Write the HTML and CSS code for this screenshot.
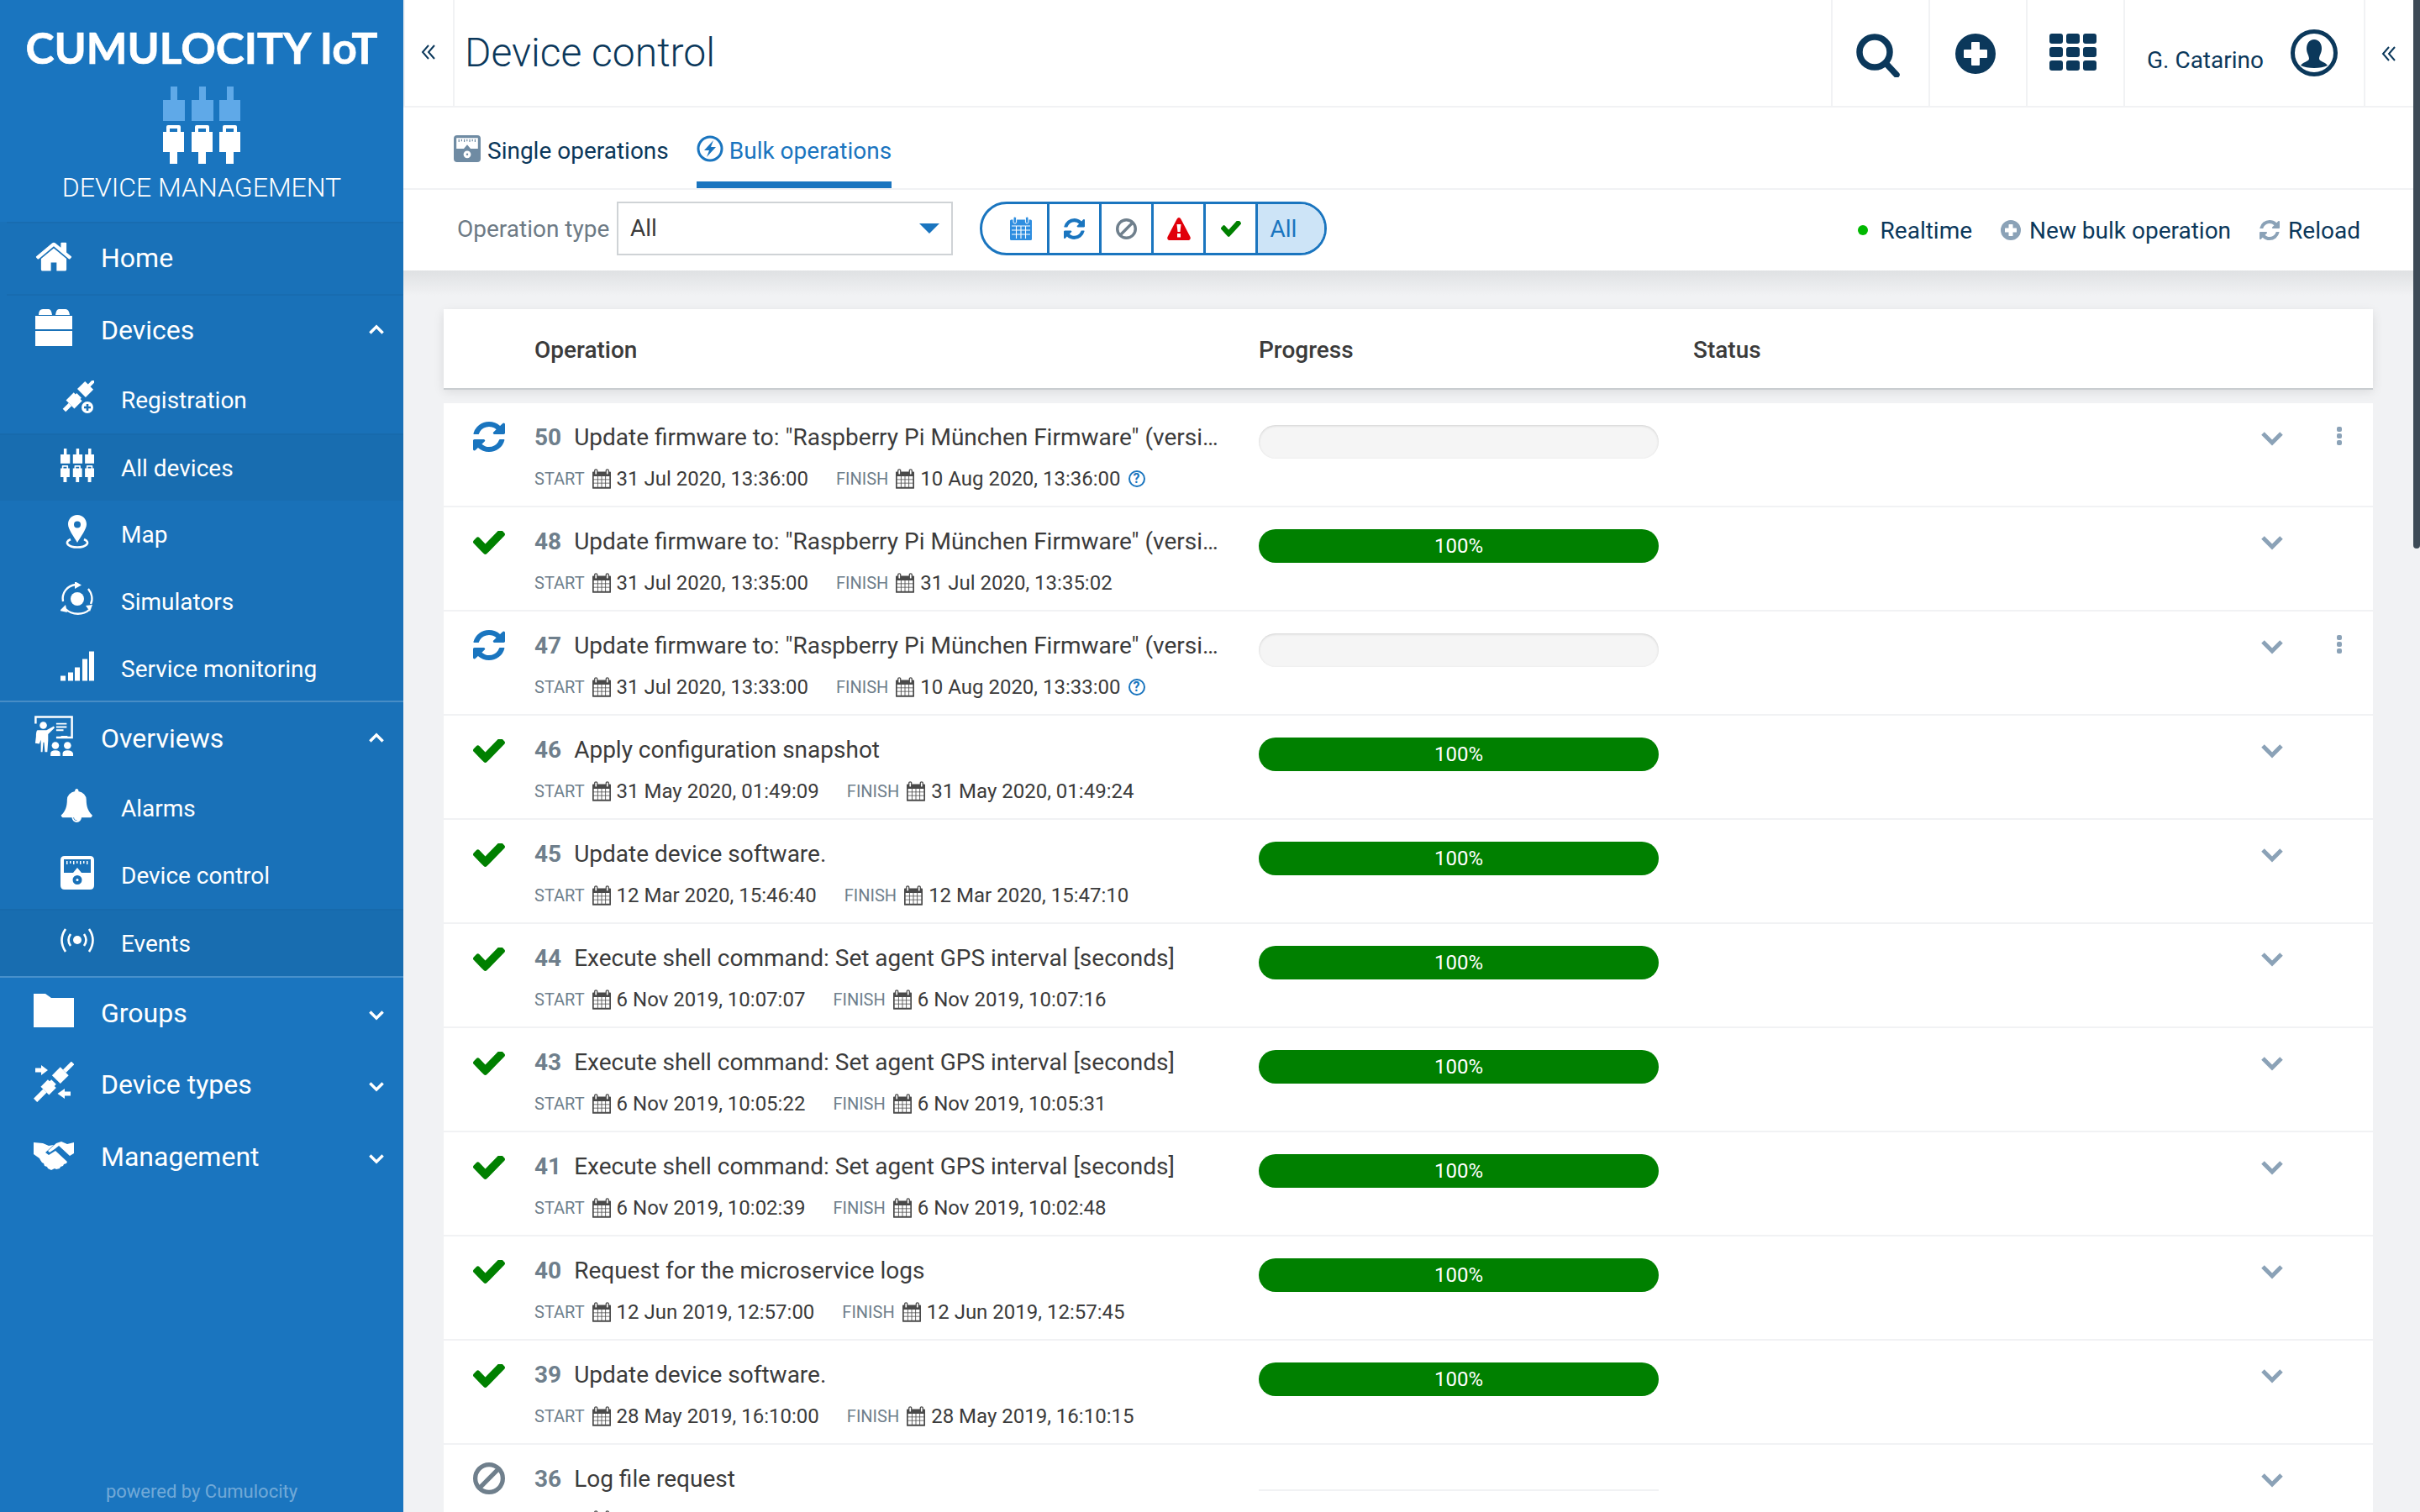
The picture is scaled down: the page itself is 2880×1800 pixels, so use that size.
FILE: index.html
```html
<!DOCTYPE html>
<html lang="en">
<head>
  <meta charset="UTF-8" />
  <title>Device control</title>
  <link rel="stylesheet" href="styles.css">
</head>
<body>
  <svg class="defs" width="0" height="0">
    <symbol id="i-plugs" viewBox="0 0 92 92">
      <g class="plug-top">
        <path d="M8 16h9V0h8v16h9v25H8z" transform="translate(-8 0)"/>
        <path d="M8 16h9V0h8v16h9v25H8z" transform="translate(26 0)"/>
        <path d="M8 16h9V0h8v16h9v25H8z" transform="translate(59 0)"/>
      </g>
      <g id="plug-low" fill="currentColor">
        <path fill-rule="evenodd" d="M0 54h4v-6q0-2 2-2h13q2 0 2 2v6h4v24h-8v14h-9V78H0zM8 50v4h9v-4z"/>
        <path fill-rule="evenodd" d="M34 54h4v-6q0-2 2-2h13q2 0 2 2v6h4v24h-8v14h-9V78H34zM42 50v4h9v-4z"/>
        <path fill-rule="evenodd" d="M67 54h4v-6q0-2 2-2h13q2 0 2 2v6h4v24h-8v14h-9V78H67zM75 50v4h9v-4z"/>
      </g>
    </symbol>
    <symbol id="i-home" viewBox="-18 -82 1829 1829"><path fill="currentColor" d="M1472 992v480q0 26-19 45t-45 19h-384v-384h-256v384h-384q-26 0-45-19t-19-45v-480q0-1 .5-3t.5-3l575-474 575 474q1 2 1 6zm223-69l-62 74q-8 9-21 11h-3q-13 0-21-7l-692-577-692 577q-12 8-24 7-13-2-21-11l-62-74q-8-10-7-23.5t11-21.5l719-599q32-26 76-26t76 26l244 204v-195q0-14 9-23t23-9h192q14 0 23 9t9 23v408l219 182q10 8 11 21.5t-7 23.5z"/></symbol>
    <symbol id="i-devices" viewBox="-2 -2 48 48"><path fill="currentColor" d="M4 7q0-7 5-7h7q3 0 4 7zM24 7q1-7 4-7h8q4 0 5 7zM0 8h44v16H0zM0 26h44v18H0z"/></symbol>
    <symbol id="i-reg" viewBox="0 0 40 40">
      <g fill="currentColor" transform="rotate(45 20 20)">
        <rect x="18" y="-9" width="4" height="10"/><rect x="13" y="0" width="14" height="13"/>
        <path d="M13 19h3v-2h8v2h3v13H13z"/><rect x="17.500" y="32" width="5" height="10"/>
      </g>
      <circle cx="32" cy="32" r="8" fill="currentColor" stroke="var(--nav-bg, #1971b8)" stroke-width="2"/>
      <path d="M28 32h8M32 28v8" stroke="var(--nav-bg, #1971b8)" stroke-width="2.600"/>
    </symbol>
    <symbol id="i-pin" viewBox="0 0 40 40">
      <path fill="currentColor" fill-rule="evenodd" d="M20 0c6.500 0 11 5 11 11 0 6-7 15-11 22C16 26 9 17 9 11 9 5 13.500 0 20 0zm0 7.500a4 4 0 100 8 4 4 0 000-8z"/>
      <path fill="none" stroke="currentColor" stroke-width="2.600" d="M12 29c-9 4-2 9.500 8 9.500s17-5.500 8-9.500"/>
    </symbol>
    <symbol id="i-sim" viewBox="0 0 40 40">
      <circle cx="20" cy="20" r="8" fill="currentColor"/>
      <g fill="none" stroke="currentColor" stroke-width="2.400">
        <path d="M3 23C1 13 8 4 18 3"/><path d="M34 33c-6 6-20 7-28-1"/><path d="M33 8c4 5 6 12 3 18"/>
      </g>
      <g fill="currentColor"><path d="M17 -1l8 4.500-8 4.500zM6 27l2 9-9-2zM30 28l8-1-3 8z"/></g>
    </symbol>
    <symbol id="i-signal" viewBox="0 0 40 35"><path fill="currentColor" d="M0 29h6v6H0zM9 25h6v10H9zM17 19h6v16h-6zM26 9h6v26h-6zM34 0h6v35h-6z"/></symbol>
    <symbol id="i-board" viewBox="0 0 48 50">
      <path fill="none" stroke="currentColor" stroke-width="2.600" d="M1.500 10V1.500h45V27H27"/>
      <path fill="currentColor" d="M27 9h13v2H27zM27 13h13v2H27zM27 17h9v2h-9zM33 25h8v3h-8z"/>
      <circle cx="11" cy="12" r="4.500" fill="currentColor"/>
      <path fill="currentColor" d="M4 18h11l9-5 1 2-8 8v8l-1 14h-3l-1-12h-1l-1 12H8V30l-2 5-5-1 1-8q0-8 2-8z"/>
      <circle cx="26" cy="37" r="4.500" fill="currentColor"/><circle cx="41" cy="37" r="4.500" fill="currentColor"/>
      <path fill="currentColor" d="M20 50v-3q0-4 6-4t6 4v3zM35 50v-3q0-4 6-4t7 4v3z"/>
    </symbol>
    <symbol id="i-bell" viewBox="128 0 1600 1792"><path fill="currentColor" d="M912 1696q0-16-16-16-59 0-101.500-42.500t-42.500-101.500q0-16-16-16t-16 16q0 73 51.500 124.500t124.500 51.500q16 0 16-16zm816-288q0 52-38 90t-90 38h-448q0 106-75 181t-181 75-181-75-75-181h-448q-52 0-90-38t-38-90q50-42 91-88t85-119.500 74.500-158.500 50-206 19.500-260q0-152 117-282.500t307-158.500q-8-19-8-39 0-40 28-68t68-28 68 28 28 68q0 20-8 39 190 28 307 158.500t117 282.500q0 139 19.500 260t50 206 74.500 158.500 85 119.500 91 88z"/></symbol>
    <symbol id="i-dial" viewBox="0 0 40 40">
      <path fill="currentColor" fill-rule="evenodd" d="M5 0h30q5 0 5 5v30q0 5-5 5H5q-5 0-5-5V5q0-5 5-5zM4 4v16h11l5-6 5 6h11V4zM20 23a5.500 5.500 0 100 11 5.500 5.500 0 000-11z"/>
      <path fill="currentColor" d="M7 6h1.500v4H7zM11 6h1.500v3H11zM15 6h1.500v4H15zM19 6h1.500v3H19zM23 6h1.500v4H23zM27 6h1.500v3H27zM31 6h1.500v4H31z"/>
      <circle cx="20" cy="28.500" r="1.500" fill="currentColor"/>
    </symbol>
    <symbol id="i-events" viewBox="0 0 40 32">
      <circle cx="20" cy="15" r="5" fill="currentColor"/>
      <g fill="none" stroke="currentColor" stroke-width="2.600">
        <path d="M12 8q-5 7 0 14M28 8q5 7 0 14M6 2q-9 13 0 27M34 2q9 13 0 27"/>
      </g>
    </symbol>
    <symbol id="i-folder" viewBox="0 0 48 40"><path fill="currentColor" d="M0 0h14l7 5h27v35H0z"/></symbol>
    <symbol id="i-types" viewBox="0 0 48 48">
      <g fill="currentColor" transform="rotate(45 24 24)">
        <rect x="21.500" y="-8" width="5" height="14"/><rect x="17" y="6" width="14" height="14"/>
        <path d="M17 27h3v-3h8v3h3v12H17z"/><rect x="21" y="39" width="6" height="16"/>
      </g>
      <path fill="currentColor" d="M2 7.500h7V4l8 6-8 6v-3.500H2zM44 35.500h-7V32l-8.500 6 8.500 6v-3.500h7z"/>
    </symbol>
    <symbol id="i-hands" viewBox="0 0 48 32">
      <path fill="currentColor" d="M0 2l11 1 7 3 6-1-10 9 4 3 8-5 14 13-1 2-3 1-1 2-3 1-1 2-4 1-2-1-4 2-4-2-1-2-3-1-1-3-2-1-2-3-1-2-7-5zM48 2v13l-5 3-13-12-5 4-6 4-2-2 10-9 6-2 7 3z"/>
    </symbol>
    <symbol id="i-sync" viewBox="128 128 1536 1536" preserveAspectRatio="none"><path fill="currentColor" d="M1639 1056q0 5-1 7-64 268-268 434.500t-478 166.500q-146 0-282.500-55t-243.500-157l-129 129q-19 19-45 19t-45-19-19-45v-448q0-26 19-45t45-19h448q26 0 45 19t19 45-19 45l-137 137q71 66 161 102t187 36q134 0 250-65t186-179q11-17 53-117 8-23 30-23h192q13 0 22.500 9.500t9.500 22.500zm25-800v448q0 26-19 45t-45 19h-448q-26 0-45-19t-19-45 19-45l138-138q-148-137-349-137-134 0-250 65t-186 179q-11 17-53 117-8 23-30 23h-199q-13 0-22.500-9.500t-9.500-22.500v-7q65-268 270-434.500t480-166.500q146 0 284 55.500t245 156.500l130-129q19-19 45-19t45 19 19 45z"/></symbol>
    <symbol id="i-check" viewBox="121 402 1550 1120" preserveAspectRatio="none"><path fill="currentColor" d="M1671 566q0 40-28 68l-724 724-136 136q-28 28-68 28t-68-28l-136-136-362-362q-28-28-28-68t28-68l136-136q28-28 68-28t68 28l294 295 656-657q28-28 68-28t68 28l136 136q28 28 28 68z"/></symbol>
    <symbol id="i-ban" viewBox="0 0 36 36"><circle cx="18" cy="18" r="15.500" fill="none" stroke="currentColor" stroke-width="5"/><path d="M8 28L28 8" stroke="currentColor" stroke-width="5"/></symbol>
    <symbol id="i-warn" viewBox="0 0 28 27"><path fill="currentColor" fill-rule="evenodd" d="M14 0q1.500 0 2.500 2l11 21q1 3-1.500 4H2q-2.500-1-1.500-4l11-21Q12.500 0 14 0zM11.500 8l1 9h3l1-9zM12 19v4.500h4V19z"/></symbol>
    <symbol id="i-cal" viewBox="0 0 26 28">
      <path fill="currentColor" fill-rule="evenodd" d="M5 0q2.500 0 2.500 2v2h11V2q0-2 2.500-2t2.500 2v2H25q1 0 1 1v22q0 1-1 1H1q-1 0-1-1V5q0-1 1-1h1.500V2Q2.500 0 5 0zM5 1.500q-1 0-1 1v4q0 1 1 1t1-1v-4q0-1-1-1zM21 1.500q-1 0-1 1v4q0 1 1 1t1-1v-4q0-1-1-1zM2 10.500v4h5v-4zM8 10.500v4h4.500v-4zM13.500 10.500v4H18v-4zM19 10.500v4h5v-4zM2 15.500v4h5v-4zM8 15.500v4h4.500v-4zM13.500 15.500v4H18v-4zM19 15.500v4h5v-4zM2 20.500v5h5v-5zM8 20.500v5h4.500v-5zM13.500 20.500v5H18v-5zM19 20.500v5h5v-5z"/>
    </symbol>
    <symbol id="i-cal-solid" viewBox="0 0 26 28">
      <rect y="3.500" width="26" height="24.500" rx="1.500" fill="currentColor"/>
      <rect x="4" y="0" width="3.600" height="8" rx="1.800" fill="currentColor" stroke="#fff" stroke-width="1"/>
      <rect x="18.400" y="0" width="3.600" height="8" rx="1.800" fill="currentColor" stroke="#fff" stroke-width="1"/>
      <path fill="none" stroke="#fff" stroke-width="1.100" d="M2 11h22M2 16h22M2 21h22M7.500 11v15M13 11v15M18.500 11v15"/>
    </symbol>
    <symbol id="i-chev" viewBox="0 0 26 17"><path fill="none" stroke="currentColor" stroke-width="5" d="M2 2l11 11L24 2"/></symbol>
    <symbol id="i-dbl" viewBox="0 0 18 18"><path fill="none" stroke="currentColor" stroke-width="2" d="M9 1L2 9l7 8M16 1L9 9l7 8"/></symbol>
  </svg>

  <aside class="sidebar">
    <div class="brand">
      <div class="brand-name">CUMULOCITY IoT</div>
      <svg class="brand-plugs"><use href="#i-plugs"/></svg>
      <div class="brand-app">DEVICE MANAGEMENT</div>
    </div>
    <nav class="nav">
      <div class="nav-group">
        <a class="nav-item nav-line"><svg class="nav-icon"><use href="#i-home"/></svg>Home</a>
        <a class="nav-item nav-line"><svg class="nav-icon"><use href="#i-devices"/></svg>Devices<svg class="nav-chev up"><use href="#i-chev"/></svg></a>
        <a class="sub-item"><svg class="sub-icon"><use href="#i-reg"/></svg>Registration</a>
        <a class="sub-item active"><svg class="sub-icon"><use href="#i-plugs"/></svg>All devices</a>
        <a class="sub-item"><svg class="sub-icon"><use href="#i-pin"/></svg>Map</a>
        <a class="sub-item"><svg class="sub-icon"><use href="#i-sim"/></svg>Simulators</a>
        <a class="sub-item"><svg class="sub-icon"><use href="#i-signal"/></svg>Service monitoring</a>
      </div>
      <div class="nav-group">
        <a class="nav-item"><svg class="nav-icon"><use href="#i-board"/></svg>Overviews<svg class="nav-chev up"><use href="#i-chev"/></svg></a>
        <a class="sub-item"><svg class="sub-icon"><use href="#i-bell"/></svg>Alarms</a>
        <a class="sub-item"><svg class="sub-icon"><use href="#i-dial"/></svg>Device control</a>
        <a class="sub-item active"><svg class="sub-icon"><use href="#i-events"/></svg>Events</a>
      </div>
      <a class="nav-item"><svg class="nav-icon"><use href="#i-folder"/></svg>Groups<svg class="nav-chev"><use href="#i-chev"/></svg></a>
      <a class="nav-item"><svg class="nav-icon"><use href="#i-types"/></svg>Device types<svg class="nav-chev"><use href="#i-chev"/></svg></a>
      <a class="nav-item"><svg class="nav-icon"><use href="#i-hands"/></svg>Management<svg class="nav-chev"><use href="#i-chev"/></svg></a>
    </nav>
    <div class="powered">powered by Cumulocity</div>
  </aside>

  <main class="main">
    <header class="topbar">
      <div class="collapse-left"><svg class="dbl"><use href="#i-dbl"/></svg></div>
      <h1 class="page-title">Device control</h1>
      <div class="top-cell">
        <svg class="top-search" viewBox="0 0 52 52"><circle cx="22" cy="22" r="18" fill="none" stroke="currentColor" stroke-width="7.500"/><path d="M35 35l13 14" stroke="currentColor" stroke-width="7.500" stroke-linecap="round"/></svg>
      </div>
      <div class="top-cell">
        <svg class="top-plus" viewBox="0 0 48 48"><path fill="currentColor" fill-rule="evenodd" d="M24 0a24 24 0 110 48 24 24 0 010-48zM20 10q-1 0-1 1v8h-8q-1 0-1 1v8q0 1 1 1h8v8q0 1 1 1h8q1 0 1-1v-8h8q1 0 1-1v-8q0-1-1-1h-8v-8q0-1-1-1z"/></svg>
      </div>
      <div class="top-cell">
        <svg class="top-grid" viewBox="0 0 56 44"><g fill="currentColor"><rect width="16" height="12" rx="3"/><rect x="20" width="16" height="12" rx="3"/><rect x="40" width="16" height="12" rx="3"/><rect y="16" width="16" height="12" rx="3"/><rect x="20" y="16" width="16" height="12" rx="3"/><rect x="40" y="16" width="16" height="12" rx="3"/><rect y="32" width="16" height="12" rx="3"/><rect x="20" y="32" width="16" height="12" rx="3"/><rect x="40" y="32" width="16" height="12" rx="3"/></g></svg>
      </div>
      <div class="top-user">
        <span class="user-name">G. Catarino</span>
        <svg class="top-avatar" viewBox="0 0 56 56"><circle cx="28" cy="28" r="25.500" fill="none" stroke="currentColor" stroke-width="5"/><path fill="currentColor" d="M28 12c6 0 9 5 9 11 0 5-3 8-3 12 0 3 8 4 10 8-4 2-10 3-16 3s-12-1-16-3c2-4 10-5 10-8 0-4-3-7-3-12 0-6 3-11 9-11z"/></svg>
      </div>
      <div class="collapse-right"><svg class="dbl"><use href="#i-dbl"/></svg></div>
    </header>

    <div class="tabs">
      <a class="tab"><svg class="tab-icon tab-icon-grey"><use href="#i-dial"/></svg>Single operations</a>
      <a class="tab active">
        <svg class="tab-icon" viewBox="0 0 32 32"><circle cx="16" cy="16" r="14" fill="none" stroke="currentColor" stroke-width="3"/><path fill="currentColor" d="M20 6L9 18h6l-3 8 11-12h-6z"/></svg><span>Bulk operations</span></a>
    </div>

    <div class="toolbar">
      <label class="filter-label">Operation type</label>
      <div class="select">All<span class="caret"></span></div>
      <div class="pill">
        <span class="pill-btn first"><svg class="pill-cal"><use href="#i-cal-solid"/></svg></span>
        <span class="pill-btn"><svg class="pill-icon blue"><use href="#i-sync"/></svg></span>
        <span class="pill-btn"><svg class="pill-icon grey"><use href="#i-ban"/></svg></span>
        <span class="pill-btn"><svg class="pill-warn"><use href="#i-warn"/></svg></span>
        <span class="pill-btn"><svg class="pill-icon pill-check green"><use href="#i-check"/></svg></span>
        <span class="pill-btn last">All</span>
      </div>
      <div class="actions">
        <a class="action"><span class="dot"></span>Realtime</a>
        <a class="action"><svg class="action-icon" viewBox="0 0 48 48"><path fill="currentColor" fill-rule="evenodd" d="M24 0a24 24 0 110 48 24 24 0 010-48zM20 10q-1 0-1 1v8h-8q-1 0-1 1v8q0 1 1 1h8v8q0 1 1 1h8q1 0 1-1v-8h8q1 0 1-1v-8q0-1-1-1h-8v-8q0-1-1-1z"/></svg>New bulk operation</a>
        <a class="action"><svg class="action-icon"><use href="#i-sync"/></svg>Reload</a>
      </div>
    </div>

    <section class="content">
      <div class="table-head">
        <span></span>
        <span>Operation</span>
        <span>Progress</span>
        <span>Status</span>
      </div>

      <div class="row">
        <svg class="status blue"><use href="#i-sync"/></svg>
        <div class="op">
          <div class="op-title"><b>50</b>Update firmware to: "Raspberry Pi München Firmware" (versi…</div>
          <div class="op-meta"><small>START</small><svg class="cal"><use href="#i-cal"/></svg>31 Jul 2020, 13:36:00<small class="finish">FINISH</small><svg class="cal"><use href="#i-cal"/></svg>10 Aug 2020, 13:36:00<i class="help">?</i></div>
        </div>
        <div class="bar"></div>
        <svg class="chev"><use href="#i-chev"/></svg>
        <div class="dots"><span></span><span></span><span></span></div>
      </div>
      <div class="row">
        <svg class="status check green"><use href="#i-check"/></svg>
        <div class="op">
          <div class="op-title"><b>48</b>Update firmware to: "Raspberry Pi München Firmware" (versi…</div>
          <div class="op-meta"><small>START</small><svg class="cal"><use href="#i-cal"/></svg>31 Jul 2020, 13:35:00<small class="finish">FINISH</small><svg class="cal"><use href="#i-cal"/></svg>31 Jul 2020, 13:35:02</div>
        </div>
        <div class="bar done">100%</div>
        <svg class="chev"><use href="#i-chev"/></svg>
      </div>
      <div class="row">
        <svg class="status blue"><use href="#i-sync"/></svg>
        <div class="op">
          <div class="op-title"><b>47</b>Update firmware to: "Raspberry Pi München Firmware" (versi…</div>
          <div class="op-meta"><small>START</small><svg class="cal"><use href="#i-cal"/></svg>31 Jul 2020, 13:33:00<small class="finish">FINISH</small><svg class="cal"><use href="#i-cal"/></svg>10 Aug 2020, 13:33:00<i class="help">?</i></div>
        </div>
        <div class="bar"></div>
        <svg class="chev"><use href="#i-chev"/></svg>
        <div class="dots"><span></span><span></span><span></span></div>
      </div>
      <div class="row">
        <svg class="status check green"><use href="#i-check"/></svg>
        <div class="op">
          <div class="op-title"><b>46</b>Apply configuration snapshot</div>
          <div class="op-meta"><small>START</small><svg class="cal"><use href="#i-cal"/></svg>31 May 2020, 01:49:09<small class="finish">FINISH</small><svg class="cal"><use href="#i-cal"/></svg>31 May 2020, 01:49:24</div>
        </div>
        <div class="bar done">100%</div>
        <svg class="chev"><use href="#i-chev"/></svg>
      </div>
      <div class="row">
        <svg class="status check green"><use href="#i-check"/></svg>
        <div class="op">
          <div class="op-title"><b>45</b>Update device software.</div>
          <div class="op-meta"><small>START</small><svg class="cal"><use href="#i-cal"/></svg>12 Mar 2020, 15:46:40<small class="finish">FINISH</small><svg class="cal"><use href="#i-cal"/></svg>12 Mar 2020, 15:47:10</div>
        </div>
        <div class="bar done">100%</div>
        <svg class="chev"><use href="#i-chev"/></svg>
      </div>
      <div class="row">
        <svg class="status check green"><use href="#i-check"/></svg>
        <div class="op">
          <div class="op-title"><b>44</b>Execute shell command: Set agent GPS interval [seconds]</div>
          <div class="op-meta"><small>START</small><svg class="cal"><use href="#i-cal"/></svg>6 Nov 2019, 10:07:07<small class="finish">FINISH</small><svg class="cal"><use href="#i-cal"/></svg>6 Nov 2019, 10:07:16</div>
        </div>
        <div class="bar done">100%</div>
        <svg class="chev"><use href="#i-chev"/></svg>
      </div>
      <div class="row">
        <svg class="status check green"><use href="#i-check"/></svg>
        <div class="op">
          <div class="op-title"><b>43</b>Execute shell command: Set agent GPS interval [seconds]</div>
          <div class="op-meta"><small>START</small><svg class="cal"><use href="#i-cal"/></svg>6 Nov 2019, 10:05:22<small class="finish">FINISH</small><svg class="cal"><use href="#i-cal"/></svg>6 Nov 2019, 10:05:31</div>
        </div>
        <div class="bar done">100%</div>
        <svg class="chev"><use href="#i-chev"/></svg>
      </div>
      <div class="row">
        <svg class="status check green"><use href="#i-check"/></svg>
        <div class="op">
          <div class="op-title"><b>41</b>Execute shell command: Set agent GPS interval [seconds]</div>
          <div class="op-meta"><small>START</small><svg class="cal"><use href="#i-cal"/></svg>6 Nov 2019, 10:02:39<small class="finish">FINISH</small><svg class="cal"><use href="#i-cal"/></svg>6 Nov 2019, 10:02:48</div>
        </div>
        <div class="bar done">100%</div>
        <svg class="chev"><use href="#i-chev"/></svg>
      </div>
      <div class="row">
        <svg class="status check green"><use href="#i-check"/></svg>
        <div class="op">
          <div class="op-title"><b>40</b>Request for the microservice logs</div>
          <div class="op-meta"><small>START</small><svg class="cal"><use href="#i-cal"/></svg>12 Jun 2019, 12:57:00<small class="finish">FINISH</small><svg class="cal"><use href="#i-cal"/></svg>12 Jun 2019, 12:57:45</div>
        </div>
        <div class="bar done">100%</div>
        <svg class="chev"><use href="#i-chev"/></svg>
      </div>
      <div class="row">
        <svg class="status check green"><use href="#i-check"/></svg>
        <div class="op">
          <div class="op-title"><b>39</b>Update device software.</div>
          <div class="op-meta"><small>START</small><svg class="cal"><use href="#i-cal"/></svg>28 May 2019, 16:10:00<small class="finish">FINISH</small><svg class="cal"><use href="#i-cal"/></svg>28 May 2019, 16:10:15</div>
        </div>
        <div class="bar done">100%</div>
        <svg class="chev"><use href="#i-chev"/></svg>
      </div>
      <div class="row">
        <svg class="status ban grey"><use href="#i-ban"/></svg>
        <div class="op">
          <div class="op-title"><b>36</b>Log file request</div>
          <div class="op-meta"><small>START</small><svg class="cal"><use href="#i-cal"/></svg>30 Jun 2019, 09:44:00</div>
        </div>
        <div class="bar-line"></div>
        <svg class="chev"><use href="#i-chev"/></svg>
      </div>
    </section>
  </main>

  <div class="scrollbar"><div class="scroll-thumb"></div></div>
</body>
</html>
```

FILE: styles.css
```css
* {
  box-sizing: border-box;
}
html, body {
  margin: 0;
  height: 1800px;
  overflow: hidden;
}
body {
  display: flex;
  font-family: Roboto, 'Liberation Sans', sans-serif;
  font-size: 28px;
  background: #f1f2f4;
  color: #3b3b3b;
}
.defs {
  position: absolute;
}
a {
  color: inherit;
  text-decoration: none;
}

/* sidebar */
.sidebar {
  width: 480px;
  height: 1800px;
  flex: none;
  display: flex;
  flex-direction: column;
  background: #1a75bf;
  color: #fff;
}
.brand {
  height: 264px;
  display: flex;
  flex-direction: column;
  align-items: center;
  padding-top: 26px;
}
.brand-name {
  font-family: Lato, sans-serif;
  font-weight: 700;
  font-size: 51.5px;
  line-height: 60px;
  white-space: nowrap;
  -webkit-text-stroke: 0.7px #fff;
}
.brand-plugs {
  width: 92px;
  height: 92px;
  margin-top: 17px;
  --top: #5fa9e8;
}
.plug-top {
  fill: var(--top, currentColor);
}
.brand-app {
  font-weight: 300;
  font-size: 32px;
  line-height: 40px;
  margin-top: 8px;
}
.nav {
  flex: 1;
}
.nav-group {
  background: #1971b8;
  --nav-bg: #1971b8;
}
.nav-group + .nav-group,
.nav-group + .nav-item {
  border-top: 2px solid rgba(255,255,255,0.2);
}
.nav-group + .nav-group {
  margin-top: -2px;
}
.nav-item {
  height: 86px;
  display: flex;
  align-items: center;
  padding-left: 40px;
  font-size: 32px;
}
.nav-line {
  background: linear-gradient(#186cb0, #186cb0) 8px 0 / 100% 2px no-repeat;
}
.nav-icon {
  width: 48px;
  height: 48px;
  margin: -6px 32px 0 0;
  flex: none;
}
.nav-chev {
  width: 18px;
  height: 12px;
  margin: 6px 23px 0 auto;
}
.nav-chev.up {
  margin-top: -3px;
  transform: scaleY(-1);
}
.sub-item {
  height: 80px;
  display: flex;
  align-items: center;
  padding-left: 72px;
  font-size: 28px;
}
.sub-item.active {
  background: #186db0;
  --nav-bg: #186db0;
  border-top: 2px solid #176aac;
}
.sub-icon {
  width: 40px;
  height: 40px;
  margin: -6px 32px 0 0;
  flex: none;
}
.powered {
  height: 48px;
  padding-top: 11px;
  text-align: center;
  font-size: 22px;
  color: rgba(255,255,255,0.4);
}

/* main column */
.main {
  flex: 1;
  height: 1800px;
  overflow: hidden;
  min-width: 0;
}
.topbar {
  height: 128px;
  display: flex;
  background: #fff;
  border-bottom: 2px solid #f1f2f4;
  color: #0b385b;
}
.collapse-left {
  width: 61px;
  border-left: 2px solid #f1f2f4;
  border-right: 2px solid #f1f2f4;
  padding: 53px 0 0 19px;
}
.dbl {
  width: 18px;
  height: 18px;
  display: block;
}
.page-title {
  flex: 1;
  margin: 0;
  padding: 33px 0 0 12px;
  font-size: 48px;
  line-height: 60px;
  font-weight: 300;
}
.top-cell {
  width: 116px;
  border-left: 2px solid #f1f2f4;
  display: flex;
  justify-content: center;
  padding: 40px 6px 0 0;
}
.top-search {
  width: 52px;
  height: 52px;
}
.top-plus {
  width: 48px;
  height: 48px;
}
.top-grid {
  width: 56px;
  height: 44px;
}
.top-user {
  width: 286px;
  border-left: 2px solid #f1f2f4;
  display: flex;
  padding: 35px 0 0 26px;
}
.user-name {
  width: 171px;
  padding-top: 19px;
  line-height: 36px;
}
.top-avatar {
  width: 56px;
  height: 56px;
}
.collapse-right {
  width: 59px;
  border-left: 2px solid #f1f2f4;
  padding: 55px 0 0 19px;
}

/* tabs */
.tabs {
  height: 98px;
  display: flex;
  gap: 33px;
  padding-left: 60px;
  background: #fff;
  border-bottom: 2px solid #f1f2f4;
  color: #0b385b;
}
.tab {
  height: 96px;
  display: flex;
  align-items: center;
  gap: 8px;
  padding-top: 15px;
  border-bottom: 8px solid transparent;
}
.tab.active {
  gap: 7px;
  color: #1a75bf;
  border-bottom-color: #1a75bf;
}
.tab-icon {
  width: 32px;
  height: 32px;
  margin-top: -6px;
}
.tab-icon-grey {
  color: #6f8ba3;
}

/* filter bar */
.toolbar {
  height: 96px;
  display: flex;
  align-items: center;
  padding: 0 63px 4px 64px;
  background: #fff;
  position: relative;
}
.toolbar::after {
  content: "";
  position: absolute;
  top: 100%;
  left: 0;
  right: 0;
  height: 30px;
  background: linear-gradient(#dfe1e3, #f1f2f4);
}
.filter-label {
  width: 190px;
  color: #6d7a85;
  white-space: nowrap;
}
.select {
  width: 400px;
  height: 64px;
  border: 2px solid #cfd3d6;
  padding-left: 14px;
  line-height: 58px;
  display: flex;
  justify-content: space-between;
  align-items: center;
}
.caret {
  width: 0;
  height: 0;
  margin-right: 14px;
  border-left: 12px solid transparent;
  border-right: 12px solid transparent;
  border-top: 12px solid #1a75bf;
}
.pill {
  height: 64px;
  margin-left: 32px;
  display: flex;
  border: 3px solid #1a75bf;
  border-radius: 32px;
  overflow: hidden;
}
.pill-btn {
  width: 62px;
  display: flex;
  align-items: center;
  justify-content: center;
  border-right: 3px solid #1a75bf;
}
.pill-btn.first {
  width: 80px;
  padding-left: 14px;
}
.pill-btn.last {
  width: 79px;
  border-right: 0;
  background: #cde4f7;
  color: #1a75bf;
  padding-right: 18px;
}
.pill-icon {
  width: 25px;
  height: 25px;
}
.pill-icon.pill-check {
  width: 24px;
  height: 19px;
}
.pill-cal {
  width: 26px;
  height: 28px;
  color: #2f8ee0;
}
.pill-warn {
  width: 28px;
  height: 27px;
  color: #e1000a;
}
.blue {
  color: #1a75bf;
}
.grey {
  color: #6f7f8c;
}
.green {
  color: #008000;
}
.actions {
  margin-left: auto;
  display: flex;
  gap: 34px;
  color: #0b385b;
  padding-top: 4px;
}
.action {
  display: flex;
  align-items: center;
  gap: 10px;
}
.dot {
  width: 12px;
  height: 12px;
  margin-right: 5px;
  border-radius: 50%;
  background: #00b800;
}
.action-icon {
  width: 24px;
  height: 24px;
  color: #8ba2b7;
}

/* table */
.content {
  padding: 46px 48px 0;
}
.table-head {
  height: 94px;
  padding-top: 2px;
  display: grid;
  grid-template-columns: 108px 862px 517px 1fr;
  align-items: center;
  background: #fff;
  font-weight: 500;
  margin-bottom: 18px;
  box-shadow: 0 2px 0 #c9cdd0, 0 4px 12px rgba(0,0,0,0.1);
}
.row {
  height: 124px;
  display: grid;
  grid-template-columns: 108px 862px 476px 1fr 49px 84px;
  background: #fff;
  border-bottom: 2px solid #f1f2f4;
}
.status {
  width: 38px;
  height: 36px;
  margin: 22px 0 0 35px;
}
.status.check {
  height: 28px;
  margin-top: 28px;
}
.status.ban {
  height: 38px;
  margin-top: 21px;
}
.op {
  padding-top: 21px;
  min-width: 0;
}
.op-title {
  line-height: 40px;
  white-space: nowrap;
}
.op-title b {
  font-weight: 700;
  color: #6f7f8c;
  margin-right: 15px;
}
.op-meta {
  display: flex;
  align-items: center;
  height: 38px;
  margin-top: 10px;
  font-size: 24px;
  white-space: nowrap;
}
.op-meta small {
  font-size: 20px;
  color: #6f7f8c;
}
.op-meta .finish {
  margin-left: 33px;
}
.cal {
  width: 22px;
  height: 24px;
  margin: 0 7px 0 9px;
  color: #4a4a4a;
}
.help {
  width: 20px;
  height: 20px;
  margin-left: 9px;
  border: 2px solid #1a75bf;
  border-radius: 50%;
  color: #1a75bf;
  font-size: 16px;
  font-style: normal;
  font-weight: 700;
  line-height: 16px;
  text-align: center;
}
.bar {
  height: 40px;
  margin-top: 26px;
  border-radius: 20px;
  background: #f5f5f5;
  box-shadow: inset 0 1px 3px rgba(0,0,0,0.15);
  color: #fff;
  font-size: 24px;
  line-height: 40px;
  text-align: center;
}
.bar.done {
  background: #008000;
  box-shadow: none;
}
.bar-line {
  height: 2px;
  margin-top: 53px;
  background: #f1f2f4;
}
.chev {
  grid-column: 5;
  width: 26px;
  height: 17px;
  margin-top: 34px;
  color: #8ba2b7;
}
.dots {
  grid-column: 6;
  display: flex;
  flex-direction: column;
  align-items: center;
  gap: 2px;
  padding: 28px 0 0 4px;
}
.dots span {
  width: 6px;
  height: 6px;
  border-radius: 2px;
  background: #8ba2b7;
}

/* scrollbar */
.scrollbar {
  width: 8px;
  flex: none;
  background: #f1f2f4;
}
.scroll-thumb {
  height: 653px;
  background: #3d4a56;
  border-radius: 0 0 4px 4px;
}
```
